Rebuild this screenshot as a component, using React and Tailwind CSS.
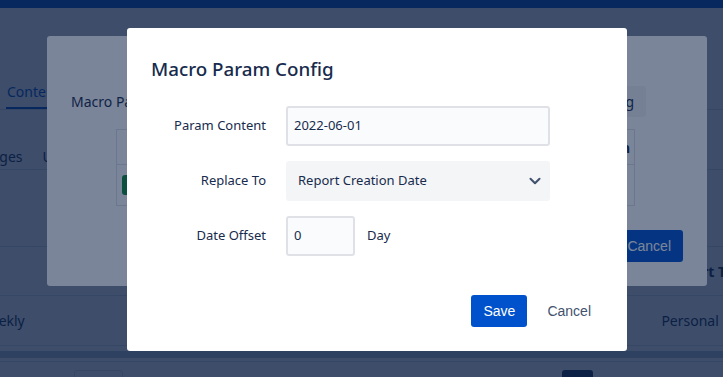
import { ChevronDown } from "lucide-react";

// background page, partly hidden behind the two dialogs
function Page() {
    return (
        <div className="flex flex-col">
            <div className="h-2 bg-[#0052cc]" />
            <div className="mt-[66px] flex h-9 border-b border-[#dfe1e6]">
                <div className="ml-[6px] flex items-center border-b-2 border-[#0052cc] pl-px pr-2 pt-[2px] text-[14px] text-[#0052cc]">Content</div>
                <div className="flex items-center px-4 text-[14px]">Settings</div>
            </div>
            <div className="mt-[33px] flex h-[27px] items-start gap-5 border-b border-[#dfe1e6] pt-[3px] text-[14px]">
                <span className="-ml-[17px]">Pages</span>
                <span>Users</span>
            </div>
            <div className="mt-[76px] flex h-[50px] items-center border-y border-[#dfe1e6] text-[14px] font-bold">
                <span className="ml-auto mr-[-28px]">Report Type</span>
            </div>
            <div className="flex h-[50px] items-center border-b border-[#dfe1e6] text-[14px]">
                <span className="-ml-[22px]">Weekly</span>
                <span className="ml-auto mr-[-44px]">Personal Report</span>
            </div>
            <div className="mt-[5px] h-[7px] bg-[#c1c7d0]" />
            <div className="mt-[3px] flex h-8 items-start border-t border-[#dfe1e6] pt-[8px]">
                <div className="ml-[74px] h-8 w-[49px] rounded-[3px] border border-[#dfe1e6]" />
                <div className="ml-[439px] h-8 w-[31px] rounded-[3px] bg-[#172b4d]" />
            </div>
        </div>
    );
}

function ListModal() {
    return (
        <div className="absolute left-[47px] top-[36px] flex h-[250px] w-[660px] flex-col rounded-[3px] bg-white px-6 pb-6">
            <div className="mt-[48px] flex h-[31px] items-center pt-[3px]">
                <span className="text-[14px]">Macro Param</span>
                <div className="ml-auto mr-[37px] flex h-[31px] items-center rounded-[3px] bg-[#f4f5f7] px-3 text-[14px]">Add Macro Param Config</div>
            </div>
            <div className="ml-[45px] mr-[48px] mt-[14px] border border-[#dfe1e6]">
                <div className="flex h-[35px] items-center justify-end border-b border-[#dfe1e6] pr-[4px] text-[14px] font-bold">Action</div>
                <div className="flex h-10 items-center px-[5px]">
                    <span className="rounded-[3px] bg-[#0f8a3c] px-2 py-[1px] text-[12px] text-white">DATE</span>
                </div>
            </div>
            <div className="mt-auto flex justify-end gap-2">
                <button className="h-8 rounded-[3px] bg-[#0052cc] px-3 font-['Liberation_Sans',sans-serif] text-[14px] text-white">OK</button>
                <button className="h-8 rounded-[3px] bg-[#0052cc] px-3 font-['Liberation_Sans',sans-serif] text-[14px] text-white">Cancel</button>
            </div>
        </div>
    );
}

function Row({ label, children }) {
    return (
        <div className="flex h-10 items-center gap-5">
            <div className="w-[115px] shrink-0 text-right text-[13px] text-[#172b4d]">{label}</div>
            {children}
        </div>
    );
}

function ConfigModal() {
    return (
        <div className="absolute left-[127px] top-[28px] flex w-[500px] flex-col rounded-[3px] bg-white px-6 pb-6 pt-[29px]">
            <h2 className="text-[18.75px] font-medium leading-6 text-[#172b4d]">Macro Param Config</h2>
            <div className="mt-[25px] flex flex-col gap-[15px]">
                <Row label="Param Content">
                    <div className="flex h-10 w-[264px] items-center rounded-[3px] border-2 border-[#dfe1e6] bg-[#fafbfc] px-[6px] text-[13px] text-[#172b4d]">2022-06-01</div>
                </Row>
                <Row label="Replace To">
                    <div className="flex h-10 w-[264px] items-center rounded-[3px] bg-[#f4f5f7] pl-3 pr-[6px] text-[13px] text-[#172b4d]">
                        <span>Report Creation Date</span>
                        <ChevronDown size={18} strokeWidth={2.75} className="ml-auto text-[#42526e]" />
                    </div>
                </Row>
                <Row label="Date Offset">
                    <div className="flex h-10 w-[69px] items-center rounded-[3px] border-2 border-[#dfe1e6] bg-[#fafbfc] px-[6px] text-[13px] text-[#172b4d]">0</div>
                    <span className="-ml-2 text-[13px] text-[#172b4d]">Day</span>
                </Row>
            </div>
            <div className="mt-[39px] flex justify-end gap-2 font-['Liberation_Sans',sans-serif] text-[14px]">
                <button className="h-8 w-14 rounded-[3px] bg-[#0052cc] text-white">Save</button>
                <button className="h-8 px-3 text-[#42526e]">Cancel</button>
            </div>
        </div>
    );
}

export default function App() {
    return (
        <div className="relative h-[377px] w-[723px] overflow-hidden bg-white font-['Noto_Sans',sans-serif] text-[#172b4d]">
            <Page />
            <div className="absolute inset-0 bg-[rgba(9,30,66,0.54)]" />
            <ListModal />
            <div className="absolute inset-0 bg-[rgba(9,30,66,0.54)]" />
            <ConfigModal />
        </div>
    );
}
